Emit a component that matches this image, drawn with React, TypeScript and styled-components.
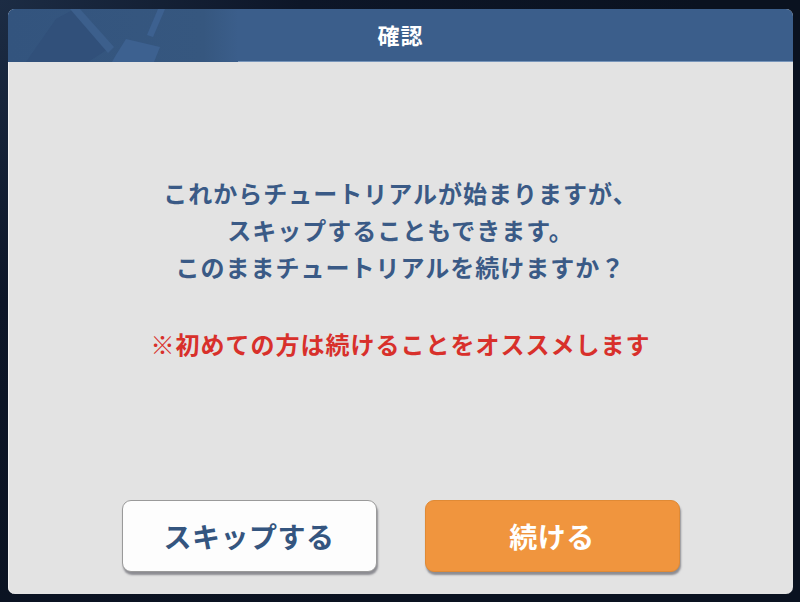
import React from "react";
import styled, { createGlobalStyle } from "styled-components";

const Global = createGlobalStyle`
  html, body {
    margin: 0;
    padding: 0;
    width: 800px;
    height: 602px;
    overflow: hidden;
    background: #0a1220;
  }
  * { box-sizing: border-box; }
`;

const Screen = styled.div`
  width: 800px;
  height: 602px;
  padding: 9px 7px 8px 8px;
  background: radial-gradient(circle at 0% 0%, #1c2c44 0%, #0d1628 30%, #0a1220 70%);
  font-family: "Noto Sans CJK JP", "Noto Sans", sans-serif;
  display: flex;
`;

const Dialog = styled.div`
  flex: 1;
  display: flex;
  flex-direction: column;
  border-radius: 7px;
  overflow: hidden;
  background: #e3e3e3;
  box-shadow: inset 1px 0 0 #f2f2f2;
`;

const Header = styled.div`
  position: relative;
  height: 53px;
  flex: none;
  background: #3b5e8b;
  border-bottom: 1px solid #7795ba;
  display: flex;
  align-items: center;
  justify-content: center;
`;

const HeaderArt = styled.svg`
  position: absolute;
  left: 0;
  top: 0;
`;

const Title = styled.h1`
  position: relative;
  margin: 0 0 2px;
  color: #ffffff;
  font-size: 22px;
  font-weight: 700;
  letter-spacing: 1px;
  line-height: 1;
`;

const Body = styled.div`
  flex: 1;
  display: flex;
  flex-direction: column;
  align-items: center;
  padding: 112px 0 22px;
`;

const Message = styled.p`
  margin: 0;
  text-align: center;
  color: #3a5a86;
  font-size: 24px;
  font-weight: 700;
  letter-spacing: 1px;
  line-height: 37px;
`;

const Note = styled.p`
  margin: 40px 0 0;
  text-align: center;
  color: #d8302b;
  font-size: 24px;
  font-weight: 700;
  letter-spacing: 1px;
  line-height: 37px;
`;

const Actions = styled.div`
  margin-top: auto;
  display: flex;
  gap: 48px;
  justify-content: center;
`;

const Button = styled.button<{ $primary?: boolean }>`
  width: 255px;
  height: 72px;
  border-radius: 9px;
  font-family: inherit;
  font-size: 28px;
  font-weight: 700;
  letter-spacing: 0.5px;
  cursor: pointer;
  display: flex;
  align-items: center;
  justify-content: center;
  border: 1px solid ${(p) => (p.$primary ? "#e08a35" : "#9a9a9a")};
  background: ${(p) => (p.$primary ? "#f0953e" : "#fdfdfd")};
  color: ${(p) => (p.$primary ? "#ffffff" : "#34557f")};
  box-shadow: 1px 3px 2px rgba(70, 70, 80, 0.55);
`;

export default function App() {
  return (
    <>
      <Global />
      <Screen>
        <Dialog>
          <Header>
            <HeaderArt width="230" height="53" viewBox="0 0 230 53">
              <defs>
                <linearGradient id="fade" x1="0" x2="1" y1="0" y2="0">
                  <stop offset="0" stopColor="#33547e" />
                  <stop offset="0.85" stopColor="#36577f" />
                  <stop offset="1" stopColor="#3b5e8b" />
                </linearGradient>
              </defs>
              <rect x="0" y="0" width="230" height="53" fill="url(#fade)" />
              <polygon points="18,53 48,10 70,-2 100,40 80,53" fill="#31507a" />
              <polygon points="62,0 72,0 106,38 100,44" fill="#3c5f8c" />
              <polygon points="108,46 118,30 152,38 146,53 104,53" fill="#3d6190" />
              <polygon points="150,0 157,0 145,28 139,26" fill="#3d6190" />
            </HeaderArt>
            <Title>確認</Title>
          </Header>
          <Body>
            <Message>
              これからチュートリアルが始まりますが、
              <br />
              スキップすることもできます。
              <br />
              このままチュートリアルを続けますか？
            </Message>
            <Note>※初めての方は続けることをオススメします</Note>
            <Actions>
              <Button>スキップする</Button>
              <Button $primary>続ける</Button>
            </Actions>
          </Body>
        </Dialog>
      </Screen>
    </>
  );
}
